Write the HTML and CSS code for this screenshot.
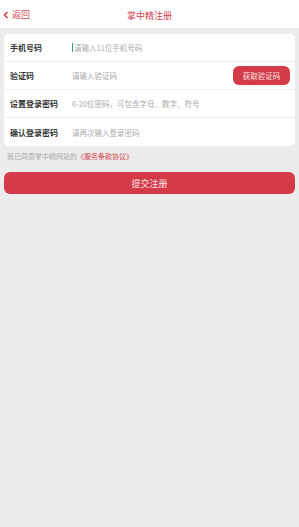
FILE: index.html
```html
<!DOCTYPE html>
<html lang="zh">
<head>
<meta charset="UTF-8" />
<title>掌中精注册</title>
<link rel="stylesheet" href="styles.css">
</head>
<body>
<div class="status"><span class="s1"></span><span class="s2"></span><span class="s3"></span><span class="s4"></span></div>
<div class="header">
  <a class="back"><svg width="6" height="8" viewBox="0 0 6 8"><path d="M4.5 1 L1.5 4 L4.5 7" fill="none" stroke="#d0434f" stroke-width="1.6"/></svg>返回</a>
  <div class="title">掌中精注册</div>
</div>

<div class="card">
  <div class="row">
    <label>手机号码</label>
    <div class="field"><span class="caret"></span>请输入11位手机号码</div>
  </div>
  <div class="row">
    <label>验证码</label>
    <div class="field">请输入验证码</div>
    <button class="code">获取验证码</button>
  </div>
  <div class="row">
    <label>设置登录密码</label>
    <div class="field">6-20位密码，可包含字母、数字、符号</div>
  </div>
  <div class="row">
    <label>确认登录密码</label>
    <div class="field">请再次输入登录密码</div>
  </div>
</div>

<p class="agree">我已同意掌中精网站的<span>《服务条款协议》</span></p>

<button class="submit">提交注册</button>
</body>
</html>
```
FILE: styles.css
```css
body { margin: 0; background: #ececec; font-family: "Noto Sans CJK SC", "Noto Sans", sans-serif; width: 299px; height: 527px; position: relative; }
.status { position: absolute; top: 0; right: 14px; display: flex; gap: 4px; }
.status span { display: block; height: 3px; background: #555; }
.status .s1 { width: 3px; } .status .s2 { width: 4px; } .status .s3 { width: 8px; } .status .s4 { width: 10px; background: #999; }
.header { height: 28px; background: #fff; display: flex; align-items: center; justify-content: center; position: relative; }
.back { position: absolute; left: 3px; top: 9px; display: flex; align-items: center; gap: 3px; font-size: 9px; color: #d0434f; line-height: 12px; }
.title { font-size: 9px; color: #d0434f; padding-top: 2px; }
.card { margin: 6px 4px 0; background: #fff; border-radius: 5px; }
.row { height: 27px; display: flex; align-items: center; border-bottom: 1px solid #eee; padding: 0 5px 0 6px; }
.row:last-child { border-bottom: none; height: 28px; }
label { width: 62px; font-size: 8px; font-weight: bold; color: #333; }
.field { flex: 1; font-size: 7.5px; color: #aaa; display: flex; align-items: center; }
.caret { width: 1px; height: 9px; background: #2a9d8f; margin-right: 1px; }
.code { border: none; background: #d43b48; color: #fbe3e5; font-size: 7.5px; height: 19px; width: 57px; border-radius: 6px; padding: 0; font-family: inherit; }
.agree { margin: 5px 7px 0; font-size: 7px; line-height: 10px; color: #aaa; }
.agree span { color: #d43b48; }
.submit { display: block; margin: 11px 4px 0; width: 291px; height: 22px; border: none; border-radius: 6px; background: #d43b48; color: #fbe3e5; font-size: 9px; font-family: inherit; padding: 0; }
```
